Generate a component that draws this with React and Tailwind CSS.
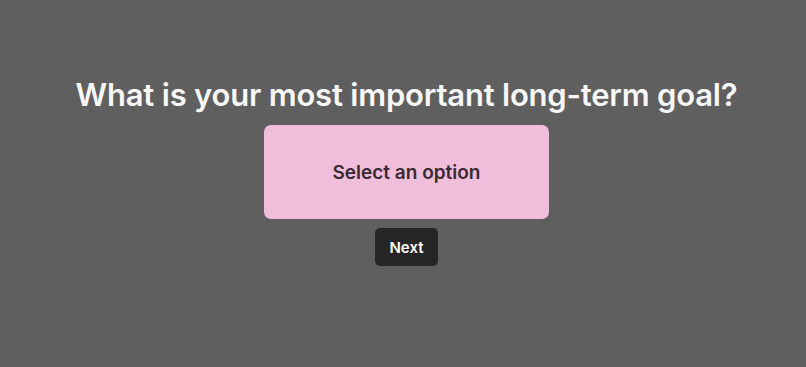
export default function App() {
  return (
    <div
      className="min-h-[367px] w-full bg-[#5f5f5f] flex flex-col items-center pt-[77px] pl-[7px]"
      style={{ fontFamily: 'Inter, "Noto Sans", sans-serif' }}
    >
      <h1 className="text-[31px] leading-[36px] font-semibold text-[#f7f7f7] tracking-[-0.2px]">
        What is your most important long-term goal?
      </h1>
      <button className="mt-[12px] w-[285px] h-[94px] pt-[2px] rounded-[7px] bg-[#f0bddb] flex items-center justify-center text-[19px] font-semibold text-[#3a2a33]">
        Select an option
      </button>
      <button className="mt-[9px] w-[63px] h-[38px] pt-[2px] rounded-[5px] bg-[#262626] text-white text-[15px] font-semibold">
        Next
      </button>
    </div>
  );
}
